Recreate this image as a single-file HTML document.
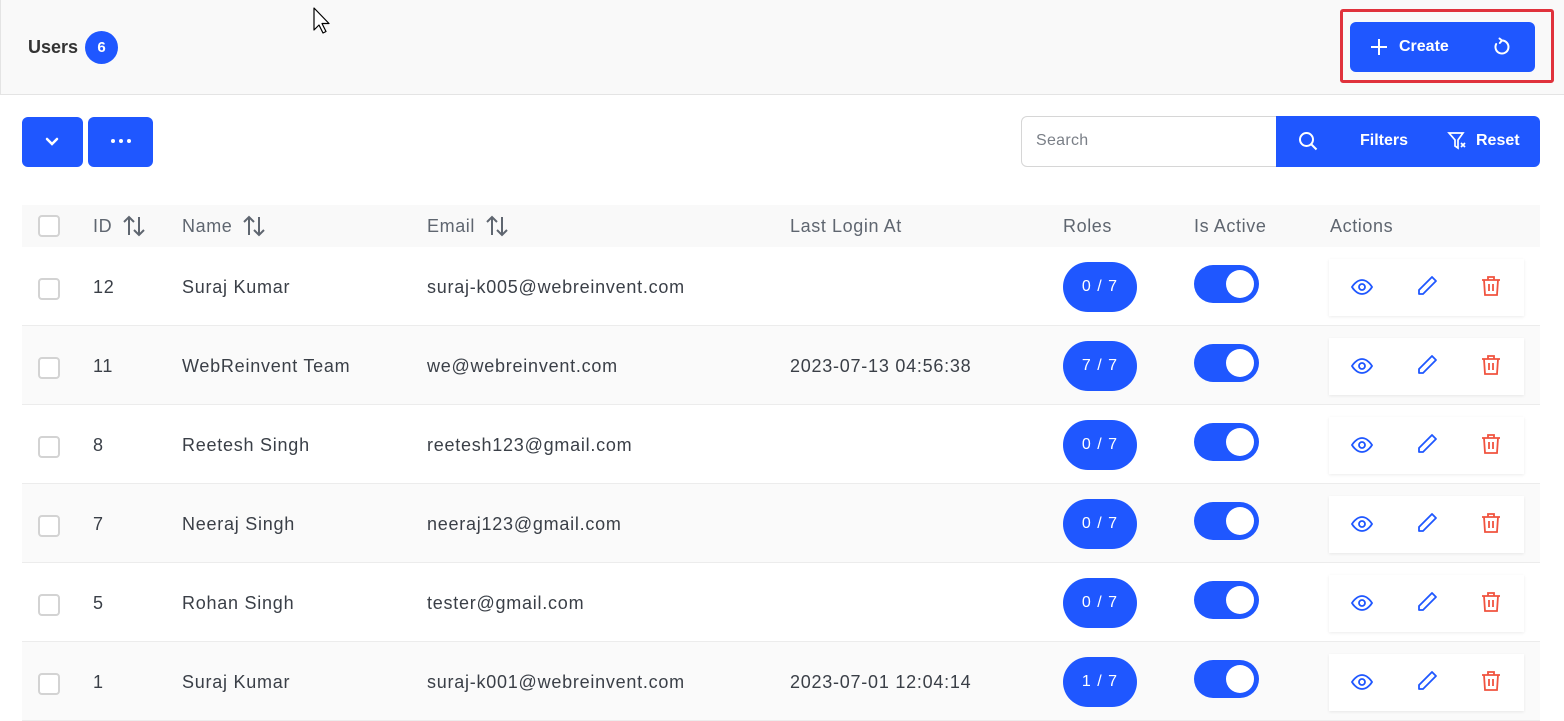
<!DOCTYPE html><html><head><meta charset="utf-8"><style>
*{box-sizing:border-box;margin:0;padding:0}
body{width:1564px;height:721px;overflow:hidden;background:#fff;font-family:"Liberation Sans",sans-serif;color:#3a3f47;position:relative}
.abs{position:absolute}
.blue{background:#1f57ff;color:#fff}
.hdr{left:0;top:0;width:1564px;height:95px;background:#f9f9f9;border-bottom:1px solid #e4e4e4;border-left:1px solid #e4e4e4}
.th{top:205px;height:42px;left:22px;width:1518px;background:#f9f9f9}
.tht{top:215px;font-size:18px;letter-spacing:.6px;color:#5f6670;display:flex;align-items:center;height:22px}
.tht svg{margin-left:10px}
.row{left:22px;width:1518px;height:79px;border-bottom:1px solid #ececec}
.cb{width:22px;height:22px;border:2px solid #d3d3d3;border-radius:4px;background:#fff}
.cell{font-size:18px;letter-spacing:.75px;color:#3a3f47}
.pill{width:74px;height:50px;border-radius:25px;font-size:16px;display:flex;align-items:center;justify-content:center;letter-spacing:1px}
.tog{width:65px;height:38px;border-radius:19px}
.tog::after{content:"";position:absolute;right:5px;top:5px;width:28px;height:28px;border-radius:50%;background:#fff}
.act{width:195px;height:57px;background:#fff;box-shadow:0 1px 3px rgba(0,0,0,.08)}
</style></head><body>
<div class="abs hdr"></div>
<div class="abs" style="left:28px;top:37px;font-size:18px;font-weight:bold;color:#333">Users</div>
<div class="abs blue" style="left:85px;top:31px;width:33px;height:33px;border-radius:50%;font-size:15px;font-weight:bold;display:flex;align-items:center;justify-content:center">6</div>
<svg class="abs" style="left:313px;top:7px" width="20" height="28" viewBox="0 0 20 28"><path d="M1 1v22l5-5 4 8 3-1.5-4-8h7z" fill="#fff" stroke="#000" stroke-width="1.2" stroke-linejoin="round"/></svg>
<div class="abs" style="left:1340px;top:9px;width:214px;height:74px;border:3px solid #e0323c;border-radius:3px"></div>
<div class="abs blue" style="left:1350px;top:22px;width:185px;height:50px;border-radius:6px"></div>
<svg class="abs" style="left:1369px;top:37px" width="20" height="20" viewBox="0 0 20 20"><path d="M10 2v16M2 10h16" stroke="#fff" stroke-width="2"/></svg>
<div class="abs" style="left:1399px;top:38px;font-size:16px;font-weight:bold;color:#fff">Create</div>
<svg class="abs" style="left:1492px;top:37px" width="20" height="20" viewBox="0 0 20 20"><path d="M10 3.5A6.5 6.5 0 1 1 4.2 7" stroke="#fff" stroke-width="2" fill="none" stroke-linecap="round"/><path d="M7.5 1.5L10 3.5 7.8 6" stroke="#fff" stroke-width="2" fill="none" stroke-linecap="round" stroke-linejoin="round"/></svg>

<div class="abs blue" style="left:22px;top:117px;width:61px;height:50px;border-radius:6px"></div>
<svg class="abs" style="left:44px;top:133px" width="16" height="16" viewBox="0 0 16 16"><path d="M3 6l5 5 5-5" stroke="#fff" stroke-width="2.5" fill="none" stroke-linecap="round"/></svg>
<div class="abs blue" style="left:88px;top:117px;width:65px;height:50px;border-radius:6px"></div>
<svg class="abs" style="left:110px;top:136px" width="22" height="10"><circle cx="3" cy="5" r="2" fill="#fff"/><circle cx="11" cy="5" r="2" fill="#fff"/><circle cx="19" cy="5" r="2" fill="#fff"/></svg>

<div class="abs" style="left:1021px;top:116px;width:258px;height:51px;border:1px solid #d6d6d6;border-radius:6px 0 0 6px;background:#fff"></div>
<div class="abs" style="left:1036px;top:132px;font-size:16px;color:#7a7f87;letter-spacing:.3px">Search</div>
<div class="abs blue" style="left:1276px;top:116px;width:264px;height:51px;border-radius:0 6px 6px 0"></div>
<svg class="abs" style="left:1298px;top:131px" width="20" height="20" viewBox="0 0 20 20"><circle cx="8.5" cy="8.5" r="6.5" stroke="#fff" stroke-width="2" fill="none"/><path d="M13.5 13.5l5 5" stroke="#fff" stroke-width="2"/></svg>
<div class="abs" style="left:1360px;top:132px;font-size:16px;font-weight:bold;color:#fff">Filters</div>
<svg class="abs" style="left:1447px;top:131px" width="20" height="20" viewBox="0 0 20 20"><path d="M2 2h14l-5 7v8l-3-2V9zM14 12l4 4M18 12l-4 4" stroke="#fff" stroke-width="1.7" fill="none"/></svg>
<div class="abs" style="left:1476px;top:132px;font-size:16px;font-weight:bold;color:#fff">Reset</div>

<div class="abs th"></div>
<div class="abs cb" style="left:38px;top:215px"></div>
<div class="abs tht" style="left:93px">ID<svg width="24" height="22" viewBox="0 0 24 22"><path d="M7 20V2M2 7l5-5 5 5M17 2v18M12 15l5 5 5-5" stroke="#5f6670" stroke-width="2" fill="none"/></svg></div>
<div class="abs tht" style="left:182px">Name<svg width="24" height="22" viewBox="0 0 24 22"><path d="M7 20V2M2 7l5-5 5 5M17 2v18M12 15l5 5 5-5" stroke="#5f6670" stroke-width="2" fill="none"/></svg></div>
<div class="abs tht" style="left:427px">Email<svg width="24" height="22" viewBox="0 0 24 22"><path d="M7 20V2M2 7l5-5 5 5M17 2v18M12 15l5 5 5-5" stroke="#5f6670" stroke-width="2" fill="none"/></svg></div>
<div class="abs tht" style="left:790px">Last Login At</div>
<div class="abs tht" style="left:1063px">Roles</div>
<div class="abs tht" style="left:1194px">Is Active</div>
<div class="abs tht" style="left:1330px">Actions</div>

<div id="rows"></div>
<script>
var d=[["12","Suraj Kumar","suraj-k005@webreinvent.com","","0 / 7"],["11","WebReinvent Team","we@webreinvent.com","2023-07-13 04:56:38","7 / 7"],["8","Reetesh Singh","reetesh123@gmail.com","","0 / 7"],["7","Neeraj Singh","neeraj123@gmail.com","","0 / 7"],["5","Rohan Singh","tester@gmail.com","","0 / 7"],["1","Suraj Kumar","suraj-k001@webreinvent.com","2023-07-01 12:04:14","1 / 7"]];
var h="";
d.forEach(function(r,i){var t=247+i*79,c=t+40;
h+='<div class="abs row" style="top:'+t+'px;background:'+(i%2?'#fafafa':'#fff')+'"></div>';
h+='<div class="abs cb" style="left:38px;top:'+(c-9)+'px"></div>';
[[93,0],[182,1],[427,2],[790,3]].forEach(function(p){h+='<div class="abs cell" style="left:'+p[0]+'px;top:'+(c-10)+'px">'+r[p[1]]+'</div>'});
h+='<div class="abs blue pill" style="left:1063px;top:'+(c-25)+'px">'+r[4]+'</div>';
h+='<div class="abs blue tog" style="left:1194px;top:'+(c-22)+'px"></div>';
h+='<div class="abs act" style="left:1329px;top:'+(c-28)+'px"></div>';
h+='<svg class="abs" style="left:1350px;top:'+(c-12)+'px" width="24" height="24" viewBox="0 0 24 24"><path d="M2 12s4-7 10-7 10 7 10 7-4 7-10 7S2 12 2 12z" stroke="#1f57ff" stroke-width="1.8" fill="none"/><circle cx="12" cy="12" r="3" stroke="#1f57ff" stroke-width="1.8" fill="none"/></svg>';
h+='<svg class="abs" style="left:1415px;top:'+(c-13)+'px" width="24" height="24" viewBox="0 0 24 24"><path d="M17 3l4 4L8 20H4v-4z" stroke="#1f57ff" stroke-width="1.8" fill="none" stroke-linejoin="round"/></svg>';
h+='<svg class="abs" style="left:1479px;top:'+(c-13)+'px" width="24" height="24" viewBox="0 0 24 24"><path d="M3 6h18M9 6V3h6v3M5 6l1 15h12l1-15M10 10v7M14 10v7" stroke="#f0533f" stroke-width="1.8" fill="none"/></svg>';
});
document.getElementById("rows").innerHTML=h;
</script>
</body></html>
